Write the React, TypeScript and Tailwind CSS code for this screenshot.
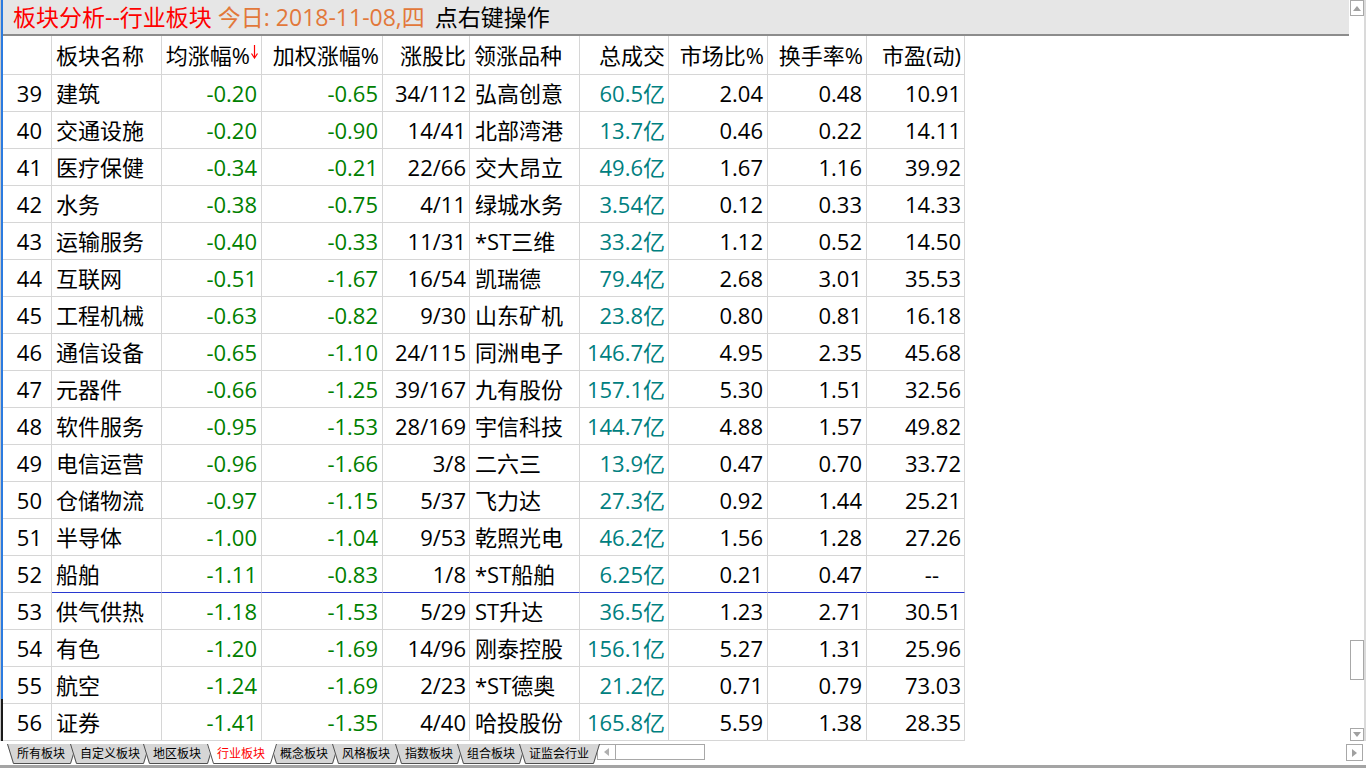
import React from "react";

type Row = [string, string, string, string, string, string, string, string, string, string];

const rows: Row[] = [
  ["39", "建筑", "-0.20", "-0.65", "34/112", "弘高创意", "60.5亿", "2.04", "0.48", "10.91"],
  ["40", "交通设施", "-0.20", "-0.90", "14/41", "北部湾港", "13.7亿", "0.46", "0.22", "14.11"],
  ["41", "医疗保健", "-0.34", "-0.21", "22/66", "交大昂立", "49.6亿", "1.67", "1.16", "39.92"],
  ["42", "水务", "-0.38", "-0.75", "4/11", "绿城水务", "3.54亿", "0.12", "0.33", "14.33"],
  ["43", "运输服务", "-0.40", "-0.33", "11/31", "*ST三维", "33.2亿", "1.12", "0.52", "14.50"],
  ["44", "互联网", "-0.51", "-1.67", "16/54", "凯瑞德", "79.4亿", "2.68", "3.01", "35.53"],
  ["45", "工程机械", "-0.63", "-0.82", "9/30", "山东矿机", "23.8亿", "0.80", "0.81", "16.18"],
  ["46", "通信设备", "-0.65", "-1.10", "24/115", "同洲电子", "146.7亿", "4.95", "2.35", "45.68"],
  ["47", "元器件", "-0.66", "-1.25", "39/167", "九有股份", "157.1亿", "5.30", "1.51", "32.56"],
  ["48", "软件服务", "-0.95", "-1.53", "28/169", "宇信科技", "144.7亿", "4.88", "1.57", "49.82"],
  ["49", "电信运营", "-0.96", "-1.66", "3/8", "二六三", "13.9亿", "0.47", "0.70", "33.72"],
  ["50", "仓储物流", "-0.97", "-1.15", "5/37", "飞力达", "27.3亿", "0.92", "1.44", "25.21"],
  ["51", "半导体", "-1.00", "-1.04", "9/53", "乾照光电", "46.2亿", "1.56", "1.28", "27.26"],
  ["52", "船舶", "-1.11", "-0.83", "1/8", "*ST船舶", "6.25亿", "0.21", "0.47", "--"],
  ["53", "供气供热", "-1.18", "-1.53", "5/29", "ST升达", "36.5亿", "1.23", "2.71", "30.51"],
  ["54", "有色", "-1.20", "-1.69", "14/96", "刚泰控股", "156.1亿", "5.27", "1.31", "25.96"],
  ["55", "航空", "-1.24", "-1.69", "2/23", "*ST德奥", "21.2亿", "0.71", "0.79", "73.03"],
  ["56", "证券", "-1.41", "-1.35", "4/40", "哈投股份", "165.8亿", "5.59", "1.38", "28.35"],
];

const widths = [
  "w-[49px]",
  "w-[110px]",
  "w-[100px]",
  "w-[121px]",
  "w-[87px]",
  "w-[110px]",
  "w-[89px]",
  "w-[99px]",
  "w-[99px]",
  "w-[98px]",
];

const align = [
  "justify-end pr-[9px]",
  "justify-start pl-[4px]",
  "justify-end pr-[4px]",
  "justify-end pr-[4px]",
  "justify-end pr-[3px]",
  "justify-start pl-[5px]",
  "justify-end pr-[3px]",
  "justify-end pr-[4px]",
  "justify-end pr-[4px]",
  "justify-end pr-[3px]",
];

const colors = [
  "text-black",
  "text-black",
  "text-[#008000]",
  "text-[#008000]",
  "text-black",
  "text-black",
  "text-[#008080]",
  "text-black",
  "text-black",
  "text-black",
];

const headers = ["", "板块名称", "均涨幅%", "加权涨幅%", "涨股比", "领涨品种", "总成交", "市场比%", "换手率%", "市盈(动)"];

const tabs = [
  { label: "所有板块", w: 63 },
  { label: "自定义板块", w: 73 },
  { label: "地区板块", w: 64 },
  { label: "行业板块", w: 63, active: true },
  { label: "概念板块", w: 62 },
  { label: "风格板块", w: 63 },
  { label: "指数板块", w: 62 },
  { label: "组合板块", w: 62 },
  { label: "证监会行业", w: 74 },
];

function Tab({ label, w, active, z }: { label: string; w: number; active?: boolean; z: number }) {
  const h = 20;
  return (
    <div className="relative h-[20px] shrink-0" style={{ width: w, zIndex: active ? 50 : z }}>
      <svg
        className="absolute left-0 top-0 overflow-visible"
        width={w + 7}
        height={h}
        viewBox={`0 0 ${w + 7} ${h}`}
      >
        <polygon points={`0,0 ${w + 7},0 ${w + 1},${h} 6,${h}`} fill={active ? "#ffffff" : "#d6d6d6"} />
        <polyline
          points={`0.5,0 6.5,${h - 0.5} ${w + 0.5},${h - 0.5} ${w + 6.5},0`}
          fill="none"
          stroke="#505050"
          strokeWidth="1"
        />
      </svg>
      <span
        className={`absolute left-0 top-0 flex h-[20px] items-center pl-[10px] text-[12px] leading-none whitespace-nowrap ${
          active ? "text-[#ff0000]" : "text-black"
        }`}
        style={{ width: w + 7 }}
      >
        {label}
      </span>
    </div>
  );
}

export default function App() {
  return (
    <div className="flex h-[768px] w-[1366px] flex-col overflow-hidden bg-white font-['Open_Sans','Noto_Sans_CJK_SC',sans-serif] text-black">
      <div className="flex h-[741px] shrink-0">
        {/* left strip */}
        <div className="flex w-[3px] shrink-0 flex-col border-l border-[#c8c8c8]">
          <div className="flex-1 bg-[#2b7be0]" />
          <div className="h-[42px] bg-[#1a1a1a]" />
        </div>

        {/* main */}
        <div className="flex w-[1346px] shrink-0 flex-col">
          <div className="flex h-[36px] shrink-0 items-center border-b-2 border-[#8c8c8c] bg-[#e6e6e6] pl-[10px] text-[23px] leading-none whitespace-nowrap">
            <span className="text-[#ff0000]">板块分析--行业板块</span>
            <span className="ml-[6px] text-[#e2783a]">今日: 2018-11-08,四</span>
            <span className="ml-[10px] text-black">点右键操作</span>
          </div>

          <div className="flex flex-col">
            <div className="flex h-[39px]">
              {headers.map((h, i) => (
                <div
                  key={i}
                  className={`flex h-full shrink-0 items-center border-r border-b border-[#d6d6d6] text-[22px] leading-none whitespace-nowrap ${widths[i]} ${
                    i === 1 || i === 5 ? "justify-start pl-[4px]" : "justify-end pr-[3px]"
                  }`}
                >
                  <span>{h}</span>
                  {i === 2 && (
                    <svg width="7" height="14" viewBox="0 0 7 14" className="ml-[1px] mb-[6px]">
                      <line x1="3.5" y1="0" x2="3.5" y2="12" stroke="#ff0000" strokeWidth="1.2" />
                      <polyline points="0.5,8.5 3.5,13 6.5,8.5" fill="none" stroke="#ff0000" strokeWidth="1.2" />
                    </svg>
                  )}
                </div>
              ))}
            </div>
            {rows.map((r, ri) => (
              <div key={ri} className="flex h-[37px]">
                {r.map((c, ci) => {
                  const blue = r[0] === "52" && ci > 0;
                  const dash = c === "--";
                  return (
                    <div
                      key={ci}
                      className={`flex h-full shrink-0 items-center border-r border-b text-[22px] leading-none whitespace-nowrap ${widths[ci]} ${
                        align[ci]
                      } ${colors[ci]} ${blue ? "border-b-[#2838d0] border-r-[#d6d6d6]" : "border-[#d6d6d6]"}`}
                    >
                      <span className={dash ? "mr-[22px]" : ""}>{c}</span>
                    </div>
                  );
                })}
              </div>
            ))}
          </div>
        </div>

        {/* vertical scrollbar */}
        <div className="flex w-[17px] shrink-0 flex-col border-r-2 border-[#dadada] pl-[1px]">
          <div className="flex h-[16px] w-[14px] items-center justify-center border border-[#a8a8a8] bg-white">
            <svg width="8" height="5" viewBox="0 0 8 5">
              <polygon points="0,5 8,5 4,0" fill="#a0a0a0" />
            </svg>
          </div>
          <div className="h-[624px]" />
          <div className="h-[40px] w-[14px] border border-[#a8a8a8] bg-white" />
          <div className="h-[48px]" />
          <div className="flex h-[13px] w-[14px] items-center justify-center border border-[#a8a8a8] bg-white">
            <svg width="8" height="5" viewBox="0 0 8 5">
              <polygon points="0,0 8,0 4,5" fill="#a0a0a0" />
            </svg>
          </div>
        </div>
      </div>

      {/* tab bar */}
      <div className="flex h-[24px] shrink-0 items-start bg-white pt-[3px]">
        <div className="w-[7px] shrink-0" />
        {tabs.map((t, i) => (
          <Tab key={t.label} label={t.label} w={t.w} active={t.active} z={i + 1} />
        ))}
        <div className="w-[4px] shrink-0" />
        <div className="flex h-[16px] w-[108px] shrink-0 border border-[#a8a8a8] bg-white">
          <div className="flex h-full w-[18px] items-center justify-center border-r border-[#a8a8a8]">
            <svg width="5" height="8" viewBox="0 0 5 8">
              <polygon points="5,0 5,8 0,4" fill="#b0b0b0" />
            </svg>
          </div>
        </div>
        <div className="flex-1" />
        <div className="mr-[3px] flex h-[17px] w-[17px] shrink-0 items-center justify-center border border-[#a8a8a8] bg-white">
          <svg width="5" height="8" viewBox="0 0 5 8">
            <polygon points="0,0 0,8 5,4" fill="#a0a0a0" />
          </svg>
        </div>
      </div>
      <div className="h-[3px] shrink-0 bg-[#a4a4a4]" />
    </div>
  );
}
